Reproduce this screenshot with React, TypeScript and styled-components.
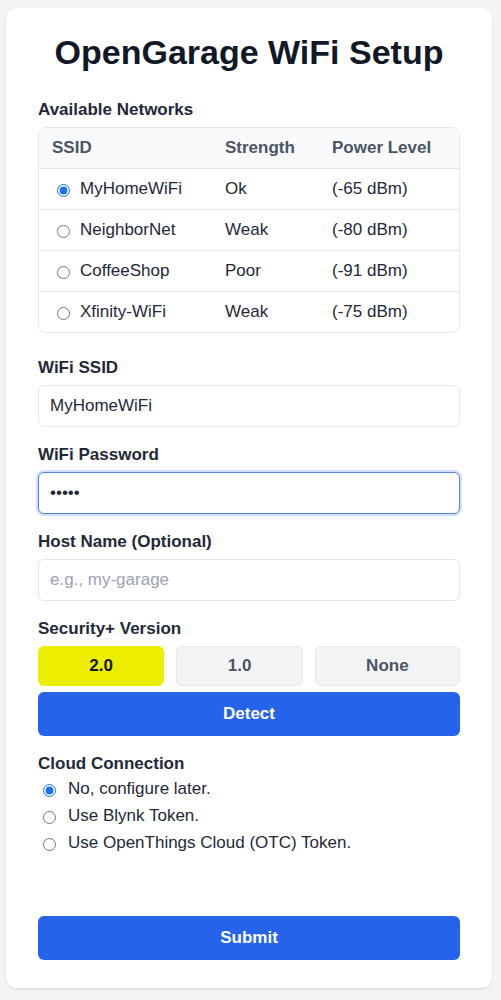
import React, { useState } from 'react';
import styled, { createGlobalStyle } from 'styled-components';

const networks = [
  { ssid: 'MyHomeWiFi', strength: 'Ok', power: '(-65 dBm)' },
  { ssid: 'NeighborNet', strength: 'Weak', power: '(-80 dBm)' },
  { ssid: 'CoffeeShop', strength: 'Poor', power: '(-91 dBm)' },
  { ssid: 'Xfinity-WiFi', strength: 'Weak', power: '(-75 dBm)' },
];

const versions = ['2.0', '1.0', 'None'];

const cloudOptions = [
  'No, configure later.',
  'Use Blynk Token.',
  'Use OpenThings Cloud (OTC) Token.',
];

export default function App() {
  const [ssid, setSsid] = useState('MyHomeWiFi');
  const [version, setVersion] = useState('2.0');
  const [cloud, setCloud] = useState(0);

  return (
    <>
      <GlobalStyle />
      <Page>
        <Card>
          <Title>OpenGarage WiFi Setup</Title>

          <Label>Available Networks</Label>
          <NetTable>
            <HeadRow>
              <Cell>SSID</Cell>
              <Cell>Strength</Cell>
              <Cell>Power Level</Cell>
            </HeadRow>
            {networks.map((n) => (
              <BodyRow key={n.ssid}>
                <Cell>
                  <RadioLabel>
                    <Radio
                      type="radio"
                      name="net"
                      checked={ssid === n.ssid}
                      onChange={() => setSsid(n.ssid)}
                    />
                    {n.ssid}
                  </RadioLabel>
                </Cell>
                <Cell>{n.strength}</Cell>
                <Cell>{n.power}</Cell>
              </BodyRow>
            ))}
          </NetTable>

          <Field>
            <Label>WiFi SSID</Label>
            <TextInput value={ssid} onChange={(e) => setSsid(e.target.value)} />
          </Field>

          <Field>
            <Label>WiFi Password</Label>
            <TextInput type="password" defaultValue="abcde" $focused />
          </Field>

          <Field>
            <Label>Host Name (Optional)</Label>
            <TextInput placeholder="e.g., my-garage" />
          </Field>

          <Label>Security+ Version</Label>
          <VersionRow>
            {versions.map((v) => (
              <VersionButton
                key={v}
                $active={version === v}
                onClick={() => setVersion(v)}
              >
                {v}
              </VersionButton>
            ))}
          </VersionRow>
          <PrimaryButton>Detect</PrimaryButton>

          <CloudSection>
            <Label>Cloud Connection</Label>
            <CloudList>
              {cloudOptions.map((c, i) => (
                <CloudOption key={c}>
                  <Radio
                    type="radio"
                    name="cloud"
                    checked={cloud === i}
                    onChange={() => setCloud(i)}
                  />
                  {c}
                </CloudOption>
              ))}
            </CloudList>
          </CloudSection>

          <SubmitButton>Submit</SubmitButton>
        </Card>
      </Page>
    </>
  );
}

const GlobalStyle = createGlobalStyle`
  html, body {
    margin: 0;
    background: #f3f4f6;
    font-family: "Liberation Sans", Arial, sans-serif;
    color: #1f2937;
  }
  * {
    box-sizing: border-box;
  }
`;

const Page = styled.div`
  padding: 8px 9px 12px 6px;
`;

const Card = styled.div`
  display: flex;
  flex-direction: column;
  background: #ffffff;
  border-radius: 10px;
  box-shadow: 0 1px 3px rgba(0, 0, 0, 0.08), 0 1px 2px rgba(0, 0, 0, 0.04);
  padding: 24px 32px 28px;
`;

const Title = styled.h1`
  margin: 0 0 28px;
  text-align: center;
  font-size: 34px;
  line-height: 40px;
  font-weight: 700;
  color: #111827;
`;

const Label = styled.div`
  font-size: 17px;
  font-weight: 700;
  line-height: 20px;
  color: #1f2937;
  margin-bottom: 7px;
`;

const NetTable = styled.div`
  border: 1px solid #e5e7eb;
  border-radius: 8px;
  overflow: hidden;
  margin-bottom: 25px;
`;

const HeadRow = styled.div`
  display: grid;
  grid-template-columns: 173px 107px 1fr;
  height: 40px;
  align-items: center;
  background: #f9fafb;
  color: #4b5563;
  font-weight: 700;
  font-size: 17px;
`;

const BodyRow = styled.div`
  display: grid;
  grid-template-columns: 173px 107px 1fr;
  height: 41px;
  align-items: center;
  border-top: 1px solid #e5e7eb;
  font-size: 17px;
  color: #1f2937;
`;

const Cell = styled.div`
  padding: 0 13px;
  white-space: nowrap;
`;

const RadioLabel = styled.label`
  display: flex;
  align-items: center;
  cursor: pointer;
`;

const Radio = styled.input`
  width: 13px;
  height: 13px;
  margin: 2px 10px 0 5px;
  accent-color: #1a73e8;
`;

const Field = styled.div`
  display: flex;
  flex-direction: column;
  margin-bottom: 18px;
`;

const TextInput = styled.input<{ $focused?: boolean }>`
  height: 42px;
  padding: 0 11px;
  border: 1px solid ${({ $focused }) => ($focused ? '#5a82d6' : '#e5e7eb')};
  border-radius: 6px;
  box-shadow: ${({ $focused }) =>
    $focused ? '0 0 0 2px rgba(59, 130, 246, 0.25)' : 'none'};
  font-family: inherit;
  font-size: 17px;
  color: #1f2937;
  outline: none;

  &::placeholder {
    color: #9ca3af;
  }
`;

const VersionRow = styled.div`
  display: flex;
  gap: 12px;
  margin-bottom: 6px;
`;

const VersionButton = styled.button<{ $active: boolean }>`
  flex: 1 1 auto;
  height: 40px;
  padding: 0 16px;
  border: 1px solid ${({ $active }) => ($active ? '#eeee00' : '#e5e7eb')};
  border-radius: 6px;
  background: ${({ $active }) => ($active ? '#eeee00' : '#f3f4f6')};
  color: ${({ $active }) => ($active ? '#111827' : '#4b5563')};
  font-family: inherit;
  font-size: 17px;
  font-weight: 700;
  cursor: pointer;
`;

const PrimaryButton = styled.button`
  height: 44px;
  flex-shrink: 0;
  border: none;
  border-radius: 6px;
  background: #2563eb;
  color: #ffffff;
  font-family: inherit;
  font-size: 17px;
  font-weight: 700;
  cursor: pointer;
`;

const CloudSection = styled.div`
  margin-top: 18px;
`;

const CloudList = styled.div`
  display: flex;
  flex-direction: column;
  gap: 9px;
  margin-top: -1px;
`;

const CloudOption = styled.label`
  display: flex;
  align-items: center;
  font-size: 17px;
  line-height: 18px;
  color: #1f2937;
  cursor: pointer;

  ${Radio} {
    margin: 2px 12px 0 5px;
  }
`;

const SubmitButton = styled(PrimaryButton)`
  margin-top: 64px;
`;
